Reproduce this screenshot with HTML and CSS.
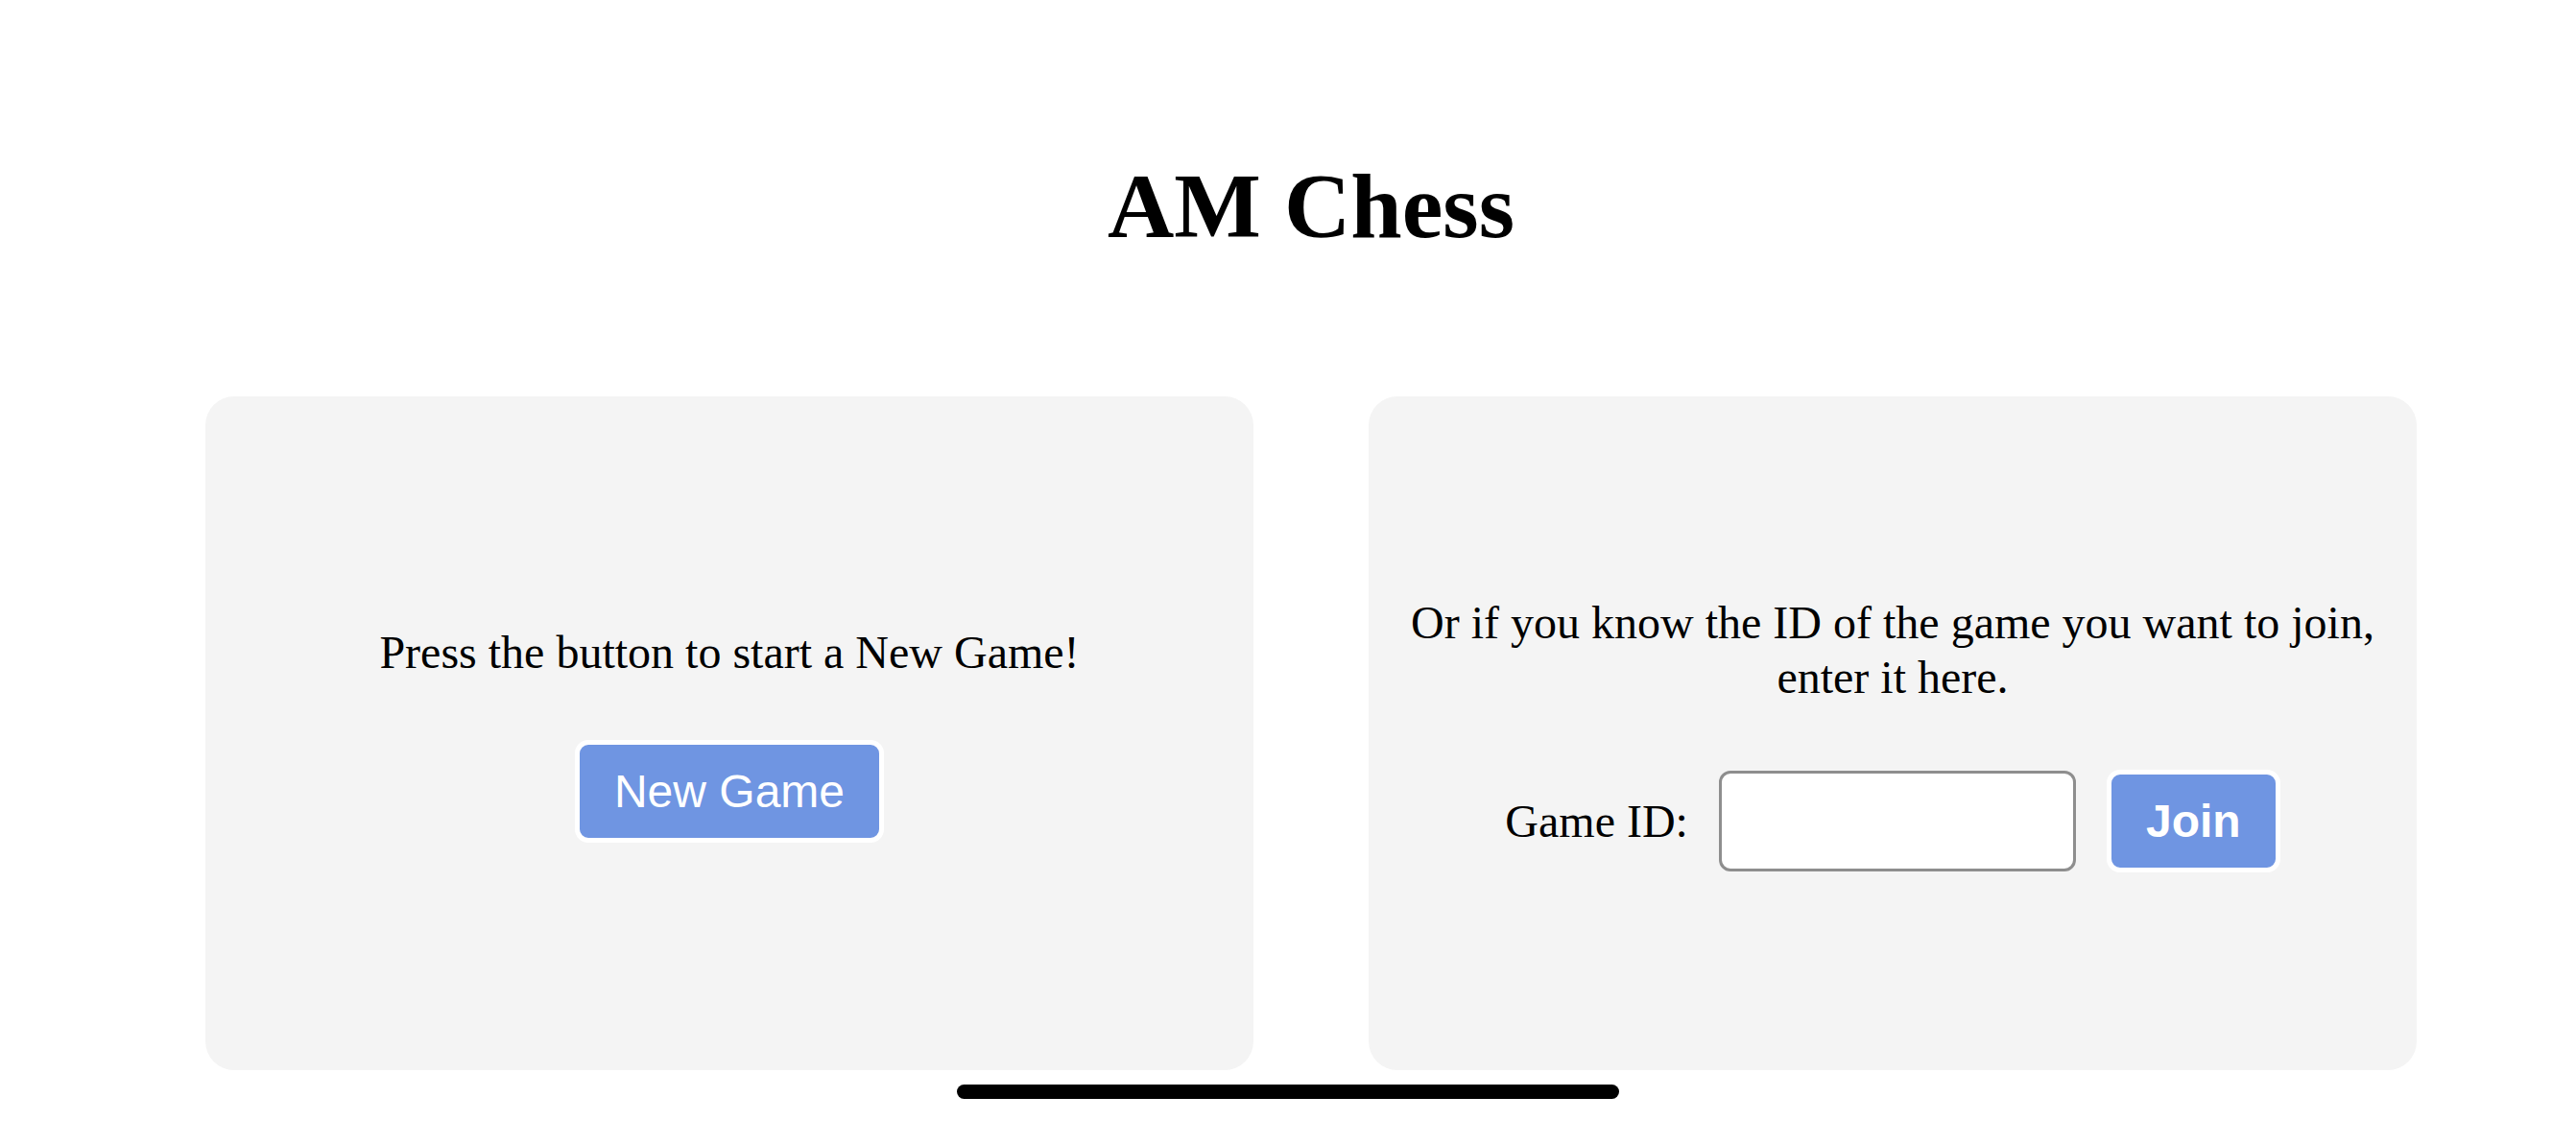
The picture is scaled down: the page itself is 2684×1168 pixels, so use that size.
FILE: index.html
```html
<!DOCTYPE html>
<html lang="en">
<head>
<meta charset="utf-8">
<title>AM Chess</title>
<link rel="stylesheet" href="styles.css">
</head>
<body>
<div class="page">
  <h1 class="title">AM Chess</h1>
  <div class="cards">
    <section class="card">
      <p class="card-text">Press the button to start a New Game!</p>
      <button class="btn btn-new" type="button">New Game</button>
    </section>
    <section class="card">
      <p class="card-text">Or if you know the ID of the game you want to join, enter it here.</p>
      <div class="join-row">
        <label class="join-label" for="gid">Game ID:</label>
        <input class="join-input" id="gid" type="text">
        <button class="btn btn-join" type="button">Join</button>
      </div>
    </section>
  </div>
</div>
<div class="home-indicator"></div>
</body>
</html>
```
FILE: styles.css
```css
html, body {
  margin: 0;
  padding: 0;
  background: #ffffff;
}
body {
  font-family: "Liberation Serif", "Times New Roman", serif;
  color: #000;
  overflow: hidden;
}
.page {
  padding: 0 166px 0 214px;
}
.title {
  margin: 160px 0 143px;
  font-size: 96px;
  line-height: 110px;
  font-weight: bold;
  text-align: center;
}
.cards {
  display: grid;
  grid-template-columns: 1092px 1092px;
  column-gap: 120px;
}
.card {
  height: 702px;
  background: #f4f4f4;
  border-radius: 30px;
  padding: 0 40px;
  box-sizing: border-box;
  display: flex;
  flex-direction: column;
  align-items: center;
  justify-content: center;
}
.card-text {
  margin: 0;
  font-size: 48px;
  line-height: 57px;
  text-align: center;
}
.btn {
  font-family: "Liberation Sans", Arial, sans-serif;
  font-size: 48px;
  line-height: 55px;
  color: #fff;
  background: #6f95e2;
  border: 5px solid #fff;
  border-radius: 14px;
  padding: 21px 36px;
  margin: 0;
}
.btn-new {
  margin-top: 63px;
}
.btn-join {
  font-weight: bold;
}
.join-row {
  margin-top: 68px;
  display: flex;
  align-items: center;
  gap: 32px;
}
.join-label {
  font-size: 48px;
  line-height: 55px;
}
.join-input {
  width: 372px;
  height: 105px;
  box-sizing: border-box;
  border: 3px solid #8e8e8e;
  border-radius: 12px;
  background: #fff;
  margin: 0;
  padding: 0 16px;
  font-size: 40px;
}
.home-indicator {
  position: fixed;
  left: 50%;
  bottom: 23px;
  width: 690px;
  height: 15px;
  margin-left: -345px;
  background: #000;
  border-radius: 8px;
}
```
